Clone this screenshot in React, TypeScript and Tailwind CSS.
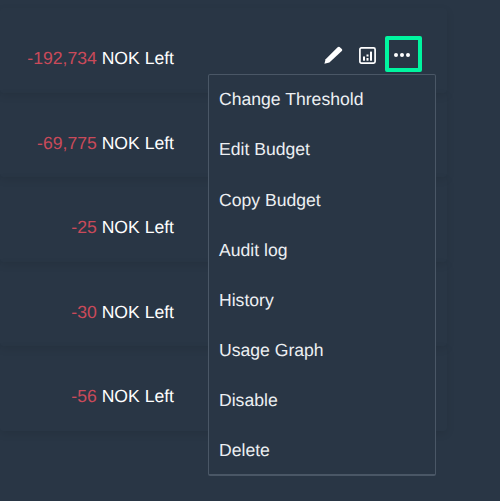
const rows = ["-192,734", "-69,775", "-25", "-30", "-56"];
const items = ["Change Threshold", "Edit Budget", "Copy Budget", "Audit log", "History", "Usage Graph", "Disable", "Delete"];

function Pencil() {
  return (
    <svg width="19" height="18" viewBox="0 0 19 18" className="block">
      <path d="M0.4 17.7 L1.6 13.2 L13.6 1.2 Q14.6 0.3 15.6 1 L17.8 3 Q18.8 4 17.8 5 L5.4 16.6 Z" fill="#fff" />
    </svg>
  );
}

function Chart() {
  return (
    <svg width="17" height="17" viewBox="0 0 17 17" fill="none" className="block">
      <rect x="0.9" y="0.9" width="15.2" height="15.2" rx="1.5" stroke="#fff" strokeWidth="1.7" />
      <rect x="4" y="9.5" width="2" height="4.2" fill="#fff" />
      <rect x="7.5" y="11" width="2" height="2.7" fill="#fff" />
      <rect x="7.5" y="7.5" width="2" height="2" fill="#fff" />
      <rect x="11" y="4.6" width="2" height="9.1" fill="#fff" />
    </svg>
  );
}

export default function App() {
  return (
    <div className="relative h-[501px] w-[500px] overflow-hidden bg-[#293645] pt-[8px] font-['Liberation_Sans',Arial,sans-serif] text-white [text-rendering:geometricPrecision] antialiased">
      {rows.map((r, i) => (
        <div key={i} className="flex h-[84.5px] w-[447px] items-start rounded-[4px] pr-[25px] pt-[27px] shadow-[0_3px_8px_rgba(0,0,0,0.09)]">
          <div className="w-[174px] whitespace-nowrap text-right text-[17.6px] leading-[46px]">
            <span className="text-[#c94a5a]">{r}</span> NOK Left
          </div>
          {i === 0 && (
            <div className="ml-auto mt-[1px] flex items-center">
              <div className="mr-[16px] mt-[2px]"><Pencil /></div>
              <div className="mr-[9px] mt-[2px]"><Chart /></div>
              <div className="flex h-[36px] w-[37px] items-center justify-center gap-[2px] rounded-[2px] border-[4px] border-[#00f5a0] pr-[3px] pt-[2px]">
                <span className="h-[4px] w-[4px] rounded-full bg-white" />
                <span className="h-[4px] w-[4px] rounded-full bg-white" />
                <span className="h-[4px] w-[4px] rounded-full bg-white" />
              </div>
            </div>
          )}
        </div>
      ))}
      <div className="absolute left-[208px] top-[74px] h-[402px] w-[228px] rounded-[2px] border border-[#4a5766] border-b-2 bg-[#293645]">
        {items.map((t) => (
          <div key={t} className="flex h-[50.1px] items-center whitespace-nowrap pb-[1px] pl-[10px] text-[17.6px] text-[#eceff2]">{t}</div>
        ))}
      </div>
    </div>
  );
}
